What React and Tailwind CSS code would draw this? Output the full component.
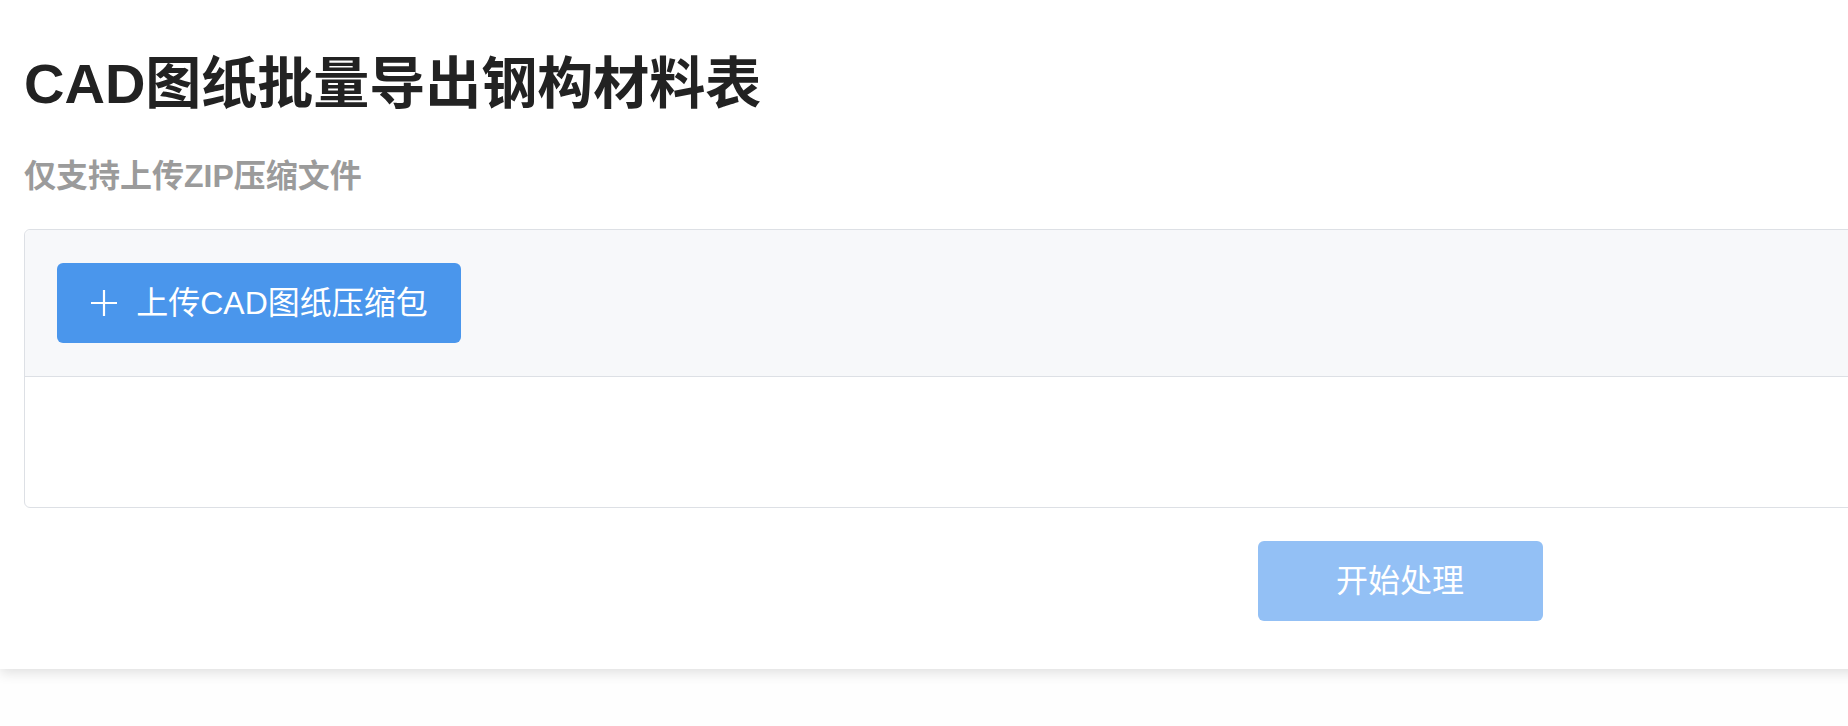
const font = { fontFamily: '"Liberation Sans", "Noto Sans CJK SC", sans-serif' }

function PlusIcon() {
  return (
    <svg width="28" height="28" viewBox="0 0 28 28" fill="none" stroke="currentColor" strokeWidth="2.2">
      <path d="M14 1v26M1 14h26" />
    </svg>
  )
}

export default function App() {
  return (
    <div className="min-h-screen w-full overflow-hidden bg-[#fefefe]" style={font}>
      <div className="w-[2800px] bg-white px-6 pb-[48px] pt-[52px] shadow-[0_4px_12px_rgba(0,0,0,0.12)]">
        <h1 className="text-[56px] font-bold leading-[64px] text-[#222222]">CAD图纸批量导出钢构材料表</h1>
        <p className="mt-[40px] text-[32px] font-bold leading-[40px] text-[#9b9b9b]">仅支持上传ZIP压缩文件</p>

        <div className="mt-[33px] rounded-[6px] border border-[#dde0e5]">
          <div className="rounded-t-[6px] border-b border-[#dde0e5] bg-[#f7f8fa] px-8 py-[33px]">
            <button className="flex h-[80px] w-[404px] items-center justify-center gap-[18px] rounded-[6px] bg-[#4a96ec] text-[32px] text-white">
              <PlusIcon />
              <span>上传CAD图纸压缩包</span>
            </button>
          </div>
          <div className="h-[130px]" />
        </div>

        <div className="mt-[33px] flex justify-center">
          <button className="h-[80px] w-[285px] rounded-[6px] bg-[#93c0f5] text-[32px] text-white">开始处理</button>
        </div>
      </div>
    </div>
  )
}
